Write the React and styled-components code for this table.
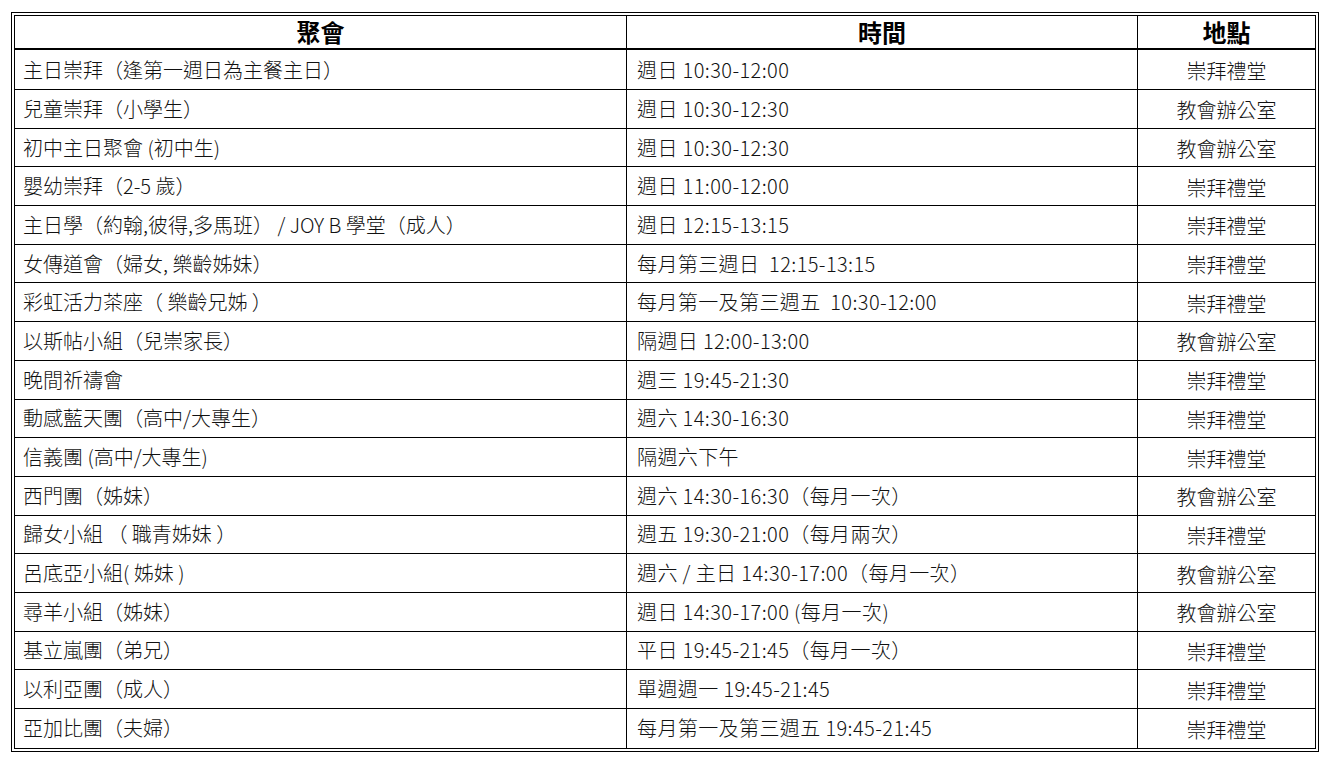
import React from "react";
import styled, { createGlobalStyle } from "styled-components";

const rows = [
  ["主日崇拜（逢第一週日為主餐主日）", "週日 10:30-12:00", "崇拜禮堂"],
  ["兒童崇拜（小學生）", "週日 10:30-12:30", "教會辦公室"],
  ["初中主日聚會 (初中生)", "週日 10:30-12:30", "教會辦公室"],
  ["嬰幼崇拜（2-5 歲）", "週日 11:00-12:00", "崇拜禮堂"],
  ["主日學（約翰,彼得,多馬班） / JOY B 學堂（成人）", "週日 12:15-13:15", "崇拜禮堂"],
  ["女傳道會（婦女, 樂齡姊妹）", "每月第三週日  12:15-13:15", "崇拜禮堂"],
  ["彩虹活力茶座（ 樂齡兄姊 ）", "每月第一及第三週五  10:30-12:00", "崇拜禮堂"],
  ["以斯帖小組（兒崇家長）", "隔週日 12:00-13:00", "教會辦公室"],
  ["晚間祈禱會", "週三 19:45-21:30", "崇拜禮堂"],
  ["動感藍天團（高中/大專生）", "週六 14:30-16:30", "崇拜禮堂"],
  ["信義團 (高中/大專生)", "隔週六下午", "崇拜禮堂"],
  ["西門團（姊妹）", "週六 14:30-16:30（每月一次）", "教會辦公室"],
  ["歸女小組 （ 職青姊妹 ）", "週五 19:30-21:00（每月兩次）", "崇拜禮堂"],
  ["呂底亞小組( 姊妹 )", "週六 / 主日 14:30-17:00（每月一次）", "教會辦公室"],
  ["尋羊小組（姊妹）", "週日 14:30-17:00 (每月一次)", "教會辦公室"],
  ["基立嵐團（弟兄）", "平日 19:45-21:45（每月一次）", "崇拜禮堂"],
  ["以利亞團（成人）", "單週週一 19:45-21:45", "崇拜禮堂"],
  ["亞加比團（夫婦）", "每月第一及第三週五 19:45-21:45", "崇拜禮堂"],
];

const GlobalStyle = createGlobalStyle`
  html, body {
    margin: 0;
    background: #fff;
  }
  body {
    font-family: "Noto Sans CJK TC", "Noto Sans", sans-serif;
    color: #111;
    text-spacing-trim: space-all;
    font-feature-settings: "halt" 0, "palt" 0, "chws" 0;
  }
`;

const Page = styled.div`
  padding: 12px 11px;
`;

const Table = styled.table`
  width: 1308px;
  border: 4px double #000;
  border-collapse: separate;
  border-spacing: 0;
  table-layout: fixed;
`;

const HeadRow = styled.tr`
  height: 34px;
`;

const HeadCell = styled.th`
  padding: 0;
  font-size: 24px;
  font-weight: 700;
  line-height: 1;
  color: #000;
  text-align: center;
  vertical-align: middle;
  border-bottom: 2px solid #000;
  border-right: 1px solid #000;
  &:last-child {
    border-right: none;
  }
`;

const Row = styled.tr`
  height: ${(p) => (p.$first ? "40px" : "38.7px")};
`;

const Cell = styled.td`
  padding: 0 8px;
  font-size: 20px;
  font-weight: 300;
  line-height: 1;
  white-space: pre;
  text-align: ${(p) => (p.$center ? "center" : "left")};
  vertical-align: middle;
  border-right: 1px solid #000;
  border-bottom: ${(p) => (p.$last ? "none" : "1px solid #000")};
  &:nth-child(2) {
    padding-left: 10px;
    letter-spacing: 0.4px;
  }
  &:last-child {
    border-right: none;
    padding-top: 3px;
  }
`;

export default function App() {
  return (
    <Page>
      <GlobalStyle />
      <Table>
        <colgroup>
          <col style={{ width: "612px" }} />
          <col style={{ width: "511px" }} />
          <col />
        </colgroup>
        <thead>
          <HeadRow>
            <HeadCell>聚會</HeadCell>
            <HeadCell>時間</HeadCell>
            <HeadCell>地點</HeadCell>
          </HeadRow>
        </thead>
        <tbody>
          {rows.map((r, i) => {
            const last = i === rows.length - 1;
            return (
              <Row key={i} $first={i === 0}>
                <Cell $last={last}>{r[0]}</Cell>
                <Cell $last={last}>{r[1]}</Cell>
                <Cell $last={last} $center>
                  {r[2]}
                </Cell>
              </Row>
            );
          })}
        </tbody>
      </Table>
    </Page>
  );
}
